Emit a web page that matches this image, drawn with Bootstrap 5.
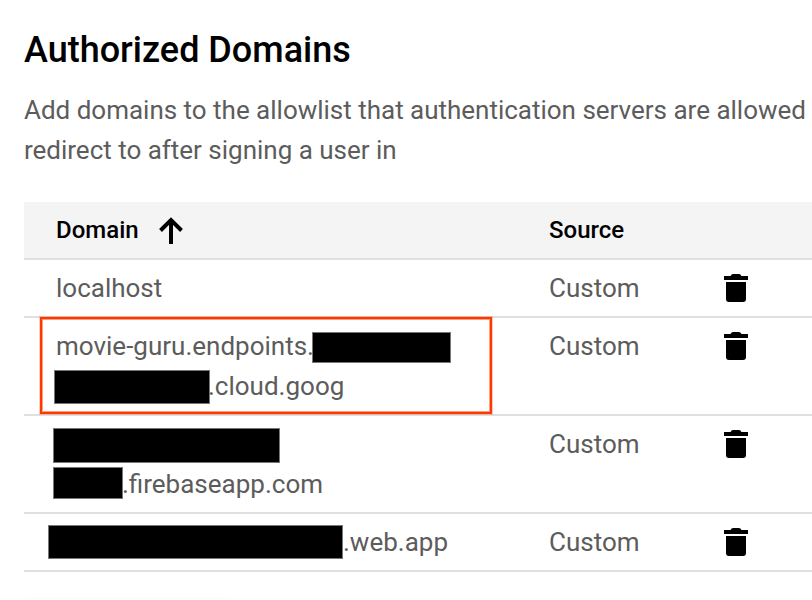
<!DOCTYPE html>
<html lang="en">
<head>
<meta charset="utf-8">
<meta name="viewport" content="width=device-width, initial-scale=1">
<title>Authorized Domains</title>
<link rel="stylesheet" href="https://cdn.jsdelivr.net/npm/bootstrap@5.3.0/dist/css/bootstrap.min.css">
<style>
body { font-family: Roboto, "Liberation Sans", sans-serif; font-size: 26px; line-height: 40px; color: #5c5c5c; height: 600px; }
.page { padding: 30px 0 0 24px; height: 600px; }
.title { font-size: 36px; line-height: 40px; font-weight: 500; color: #000; margin-bottom: 20px; }
.intro { margin-bottom: 32px; letter-spacing: -.01px; }
.domain-row { border-bottom: 2px solid #e0e0e0; padding: 8px 0 8px 32px; }
.domain-head { background: #f4f4f4; color: #000; font-weight: 500; font-size: 24px; }
.domain-cell { width: 493px; }
.source-cell { width: 171px; }
.line { height: 40px; }
.redact { background: #000; border: 1px solid #777; }
.r-project { width: 139px; height: 31px; margin: 6px 0 0 -2px; }
.r-project-end { width: 156px; height: 34px; margin: 4px -2px 0 -2px; }
.r-app { width: 227px; height: 35px; margin: 4px 0 0 -3px; }
.r-app-end { width: 70px; height: 32px; margin: 3px -1px 0 -3px; }
.r-web { width: 295px; height: 34px; margin: 3px 0 0 -8px; }
.callout { left: 16px; top: -1px; width: 452px; height: 97px; border: 2px solid #ff3800; box-shadow: 0 0 0 1px #ff380040, inset 0 0 0 1px #ff380080; }
.sort { margin-left: 19px; }
.next-button { width: 208px; height: 40px; margin: 27px 0 0 0; border-radius: 6px; box-shadow: 0 0 3px #0000000d; }
</style>
<script src="https://cdn.jsdelivr.net/npm/bootstrap@5.3.0/dist/js/bootstrap.bundle.min.js"></script>
</head>
<body class="bg-white overflow-hidden">
<svg class="d-none">
  <symbol id="trash" viewBox="0 0 32 40"><path d="M4 8H10.5Q11.5 6 13 6H19Q20.5 6 21.5 8H28V12H4ZM6 14H26V31Q26 34 23 34H9Q6 34 6 31Z"/></symbol>
</svg>
<main class="page overflow-hidden">
  <h1 class="title">Authorized Domains</h1>
  <p class="intro text-nowrap">Add domains to the allowlist that authentication servers are allowed<br>redirect to after signing a user in</p>
  <section>
    <div class="domain-row domain-head d-flex">
      <div class="domain-cell d-flex"><span>Domain</span><svg class="sort" width="26" height="40" viewBox="0 0 26 40" fill="none" stroke="#000" stroke-width="4"><path d="M13 34V10M2.5 20.5L13 10L23.500 20.500" /></svg></div>
      <div class="source-cell">Source</div>
    </div>
    <div class="domain-row d-flex">
      <div class="domain-cell">localhost</div>
      <div class="source-cell">Custom</div>
      <svg width="32" height="40"><use href="#trash"/></svg>
    </div>
    <div class="domain-row d-flex position-relative">
      <div class="domain-cell">
        <div class="line d-flex"><span>movie-guru.endpoints.</span><span class="redact r-project"></span></div>
        <div class="line d-flex"><span class="redact r-project-end"></span><span>.cloud.goog</span></div>
      </div>
      <div class="source-cell">Custom</div>
      <svg width="32" height="40"><use href="#trash"/></svg>
      <div class="callout position-absolute"></div>
    </div>
    <div class="domain-row d-flex">
      <div class="domain-cell">
        <div class="line d-flex"><span class="redact r-app"></span></div>
        <div class="line d-flex"><span class="redact r-app-end"></span><span>.firebaseapp.com</span></div>
      </div>
      <div class="source-cell">Custom</div>
      <svg width="32" height="40"><use href="#trash"/></svg>
    </div>
    <div class="domain-row d-flex">
      <div class="domain-cell line d-flex"><span class="redact r-web"></span><span>.web.app</span></div>
      <div class="source-cell">Custom</div>
      <svg width="32" height="40"><use href="#trash"/></svg>
    </div>
  </section>
  <div class="next-button"></div>
</main>
</body>
</html>
